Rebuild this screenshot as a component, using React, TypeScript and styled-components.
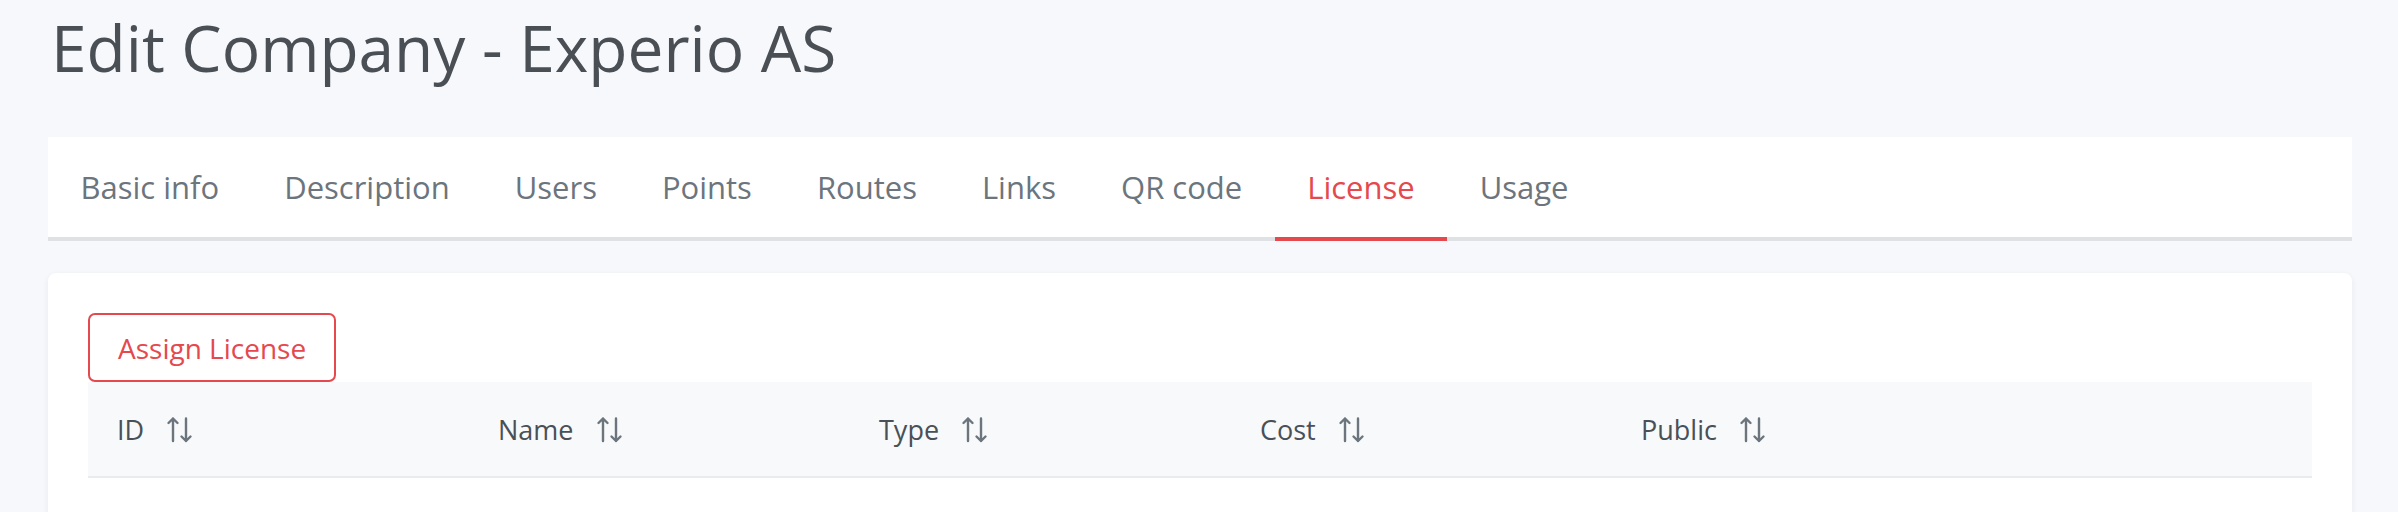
import React from "react";
import styled, { createGlobalStyle } from "styled-components";

const Global = createGlobalStyle`
  html, body { margin: 0; padding: 0; background: #f7f8fb; }
  body { font-family: "Open Sans", "Noto Sans", sans-serif; }
  * { box-sizing: border-box; }
`;

const Page = styled.div`
  width: 2398px;
  height: 512px;
  overflow: hidden;
  padding: 0 46px 0 48px;
`;

const Title = styled.h1`
  margin: 0;
  height: 137px;
  padding: 10px 0 0 3px;
  font-size: 64px;
  font-weight: 400;
  line-height: 75px;
  color: #4a4f55;
`;

const TabBar = styled.nav`
  display: flex;
  height: 104px;
  background: #ffffff;
  border-bottom: 4px solid #dfe1e5;
`;

const Tab = styled.div<{ $active?: boolean }>`
  display: flex;
  align-items: center;
  padding: 0 32.5px;
  margin-bottom: -4px;
  border-bottom: 4px solid ${(p) => (p.$active ? "#e5484d" : "transparent")};
  font-size: 31px;
  color: ${(p) => (p.$active ? "#e5484d" : "#6c757d")};
  white-space: nowrap;
`;

const Card = styled.section`
  margin-top: 32px;
  height: 300px;
  background: #ffffff;
  border-radius: 8px;
  padding: 40px;
  box-shadow: 0 2px 6px rgba(30, 40, 60, 0.07);
`;

const Button = styled.button`
  display: block;
  height: 69px;
  padding: 0 28px;
  border: 2px solid #e5484d;
  border-radius: 7px;
  background: #ffffff;
  color: #e5484d;
  font-family: inherit;
  font-size: 28px;
  font-weight: 400;
`;

const HeaderRow = styled.div`
  display: grid;
  grid-template-columns: repeat(5, 381px) 1fr;
  height: 96px;
  background: #f8f9fa;
  border-bottom: 2px solid #e9ecef;
`;

const HeaderCell = styled.div`
  display: flex;
  align-items: center;
  gap: 22px;
  padding: 0 29px;
  font-size: 27px;
  font-weight: 500;
  color: #495057;
`;

const SortIcon = () => (
  <svg width="27" height="27" viewBox="0 0 27 27" fill="none" stroke="#6c757d" strokeWidth="2.4" strokeLinecap="round" strokeLinejoin="round">
    <path d="M7 2.5V25M2.5 7L7 2.5L11.5 7" />
    <path d="M20 2.5V25M15.5 20.5L20 25L24.5 20.5" />
  </svg>
);

const tabs = ["Basic info", "Description", "Users", "Points", "Routes", "Links", "QR code", "License", "Usage"];
const cols = ["ID", "Name", "Type", "Cost", "Public"];

export default function App() {
  return (
    <Page>
      <Global />
      <Title>Edit Company - Experio AS</Title>
      <TabBar>
        {tabs.map((t) => (
          <Tab key={t} $active={t === "License"}>{t}</Tab>
        ))}
      </TabBar>
      <Card>
        <Button>Assign License</Button>
        <HeaderRow>
          {cols.map((c) => (
            <HeaderCell key={c}>
              {c}
              <SortIcon />
            </HeaderCell>
          ))}
          <HeaderCell />
        </HeaderRow>
      </Card>
    </Page>
  );
}
